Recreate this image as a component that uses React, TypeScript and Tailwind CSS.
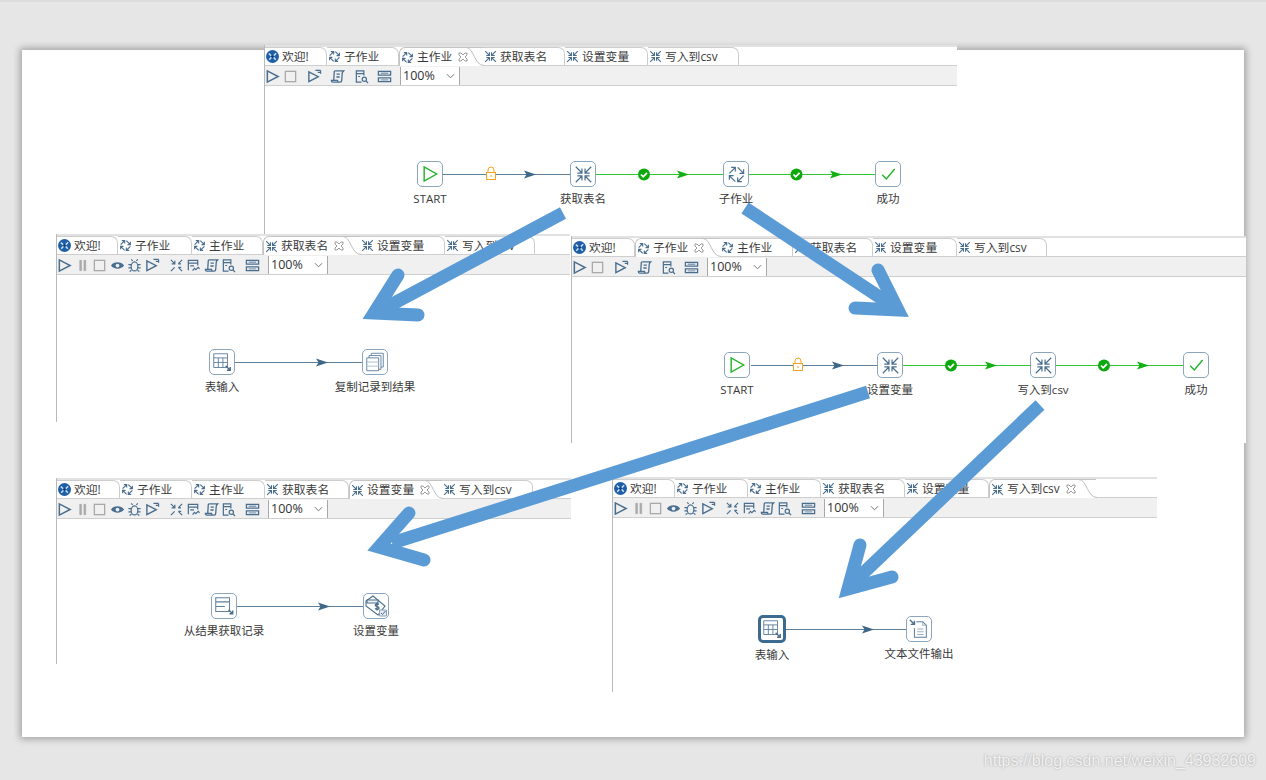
import React from "react";

const font = "font-['Open_Sans','Noto_Sans_CJK_SC',sans-serif]";

type IconProps = { className?: string; width?: number };
const stroke = "#4a6e8e";

function ArrowsIn({ className = "w-[13px] h-[13px]", width = 1.4 }: IconProps) {
  return (
    <svg viewBox="0 0 16 16" className={className} fill="none" stroke={stroke} strokeWidth={width}>
      <path d="M1.5 1.5 6.500 6.500M2.800 6.800h3.900V2.900M14.500 1.500 9.500 6.500M13.200 6.800H9.300V2.900M1.500 14.500l5-5M2.800 9.200h3.900v3.900M14.500 14.500l-5-5M13.200 9.200H9.300v3.900" />
    </svg>
  );
}

// the job icon: four arrows chasing each other round
function ArrowsRound({ className = "w-[13px] h-[13px]", width = 1.4 }: IconProps) {
  return (
    <svg viewBox="0 0 16 16" className={className} fill="none" stroke={stroke} strokeWidth={width}>
      <path d="M2 7 7 2M3.500 2H7v3.500M9 2l5 5M14 3.500V7h-3.500M14 9l-5 5M12.500 14H9v-3.500M7 14 2 9M2 12.500V9h3.500" />
    </svg>
  );
}

function Logo() {
  return (
    <svg viewBox="0 0 16 16" className="w-[13px] h-[13px]">
      <circle cx="8" cy="8" r="8" fill="#1f5fa8" />
      <path d="M3.500 4.500 6.500 7M12.500 4 9.500 7M4 12l2.800-3M12 12 9.300 9" stroke="#cfe2f5" strokeWidth="1.800" />
      <circle cx="8" cy="8" r="1.600" fill="#0e3d78" />
    </svg>
  );
}

function CloseMark() {
  return (
    <svg viewBox="0 0 10 10" className="w-[10px] h-[10px]" fill="none" stroke="#9a9a9a" strokeWidth="1">
      <path d="M1 1h2l2 2 2-2h2v2L7 5l2 2v2H7L5 7 3 9H1V7l2-2-2-2z" />
    </svg>
  );
}

function ToolIcon({ kind }: { kind: string }) {
  const common = { fill: "none", stroke, strokeWidth: 1.3 };
  return (
    <svg viewBox="0 0 16 16" className="w-[15px] h-[15px] shrink-0">
      {kind === "play" && <path d="M2.500 2v12L14 8z" {...common} strokeWidth={1.6} />}
      {kind === "pause" && <path d="M5 2.500h2v11H5zM9.500 2.500h2v11h-2z" fill="#a9a9a9" stroke="#a9a9a9" strokeWidth={0.6} />}
      {kind === "stop" && <rect x="2.500" y="2.500" width="11" height="11" fill="none" stroke="#a9a9a9" strokeWidth={1.4} />}
      {kind === "eye" && (
        <g>
          <path d="M1 8c3-4.500 11-4.500 14 0-3 4.500-11 4.500-14 0z" fill={stroke} />
          <circle cx="8" cy="8" r="2" fill="#e8eef3" />
        </g>
      )}
      {kind === "bug" && (
        <g {...common}>
          <ellipse cx="8" cy="9" rx="3.600" ry="4.800" />
          <path d="M6 3 4.500 1.500M10 3l1.500-1.500M4.400 7H1.500M11.600 7h2.900M4.400 10.500H1.500M11.600 10.500h2.900M4.800 13l-2 1.500M11.200 13l2 1.500" />
        </g>
      )}
      {kind === "runopt" && (
        <g {...common}>
          <path d="M2 3v10.500L12 8.200 2 3z" strokeWidth={1.5} />
          <path d="M9 1.500h5.500M14.500 1.500V5M11.500 3.500h2.500" />
        </g>
      )}
      {kind === "arrows" && (
        <g {...common}>
          <path d="M2 2l4 4M2.800 6.200h3.400V2.800M14 2l-4 4M9.800 6.200h3M2 14l4-4M10 10l4 4M10 10h3" />
        </g>
      )}
      {kind === "doc" && (
        <g {...common}>
          <path d="M2.500 13V2.500h10V8M2.500 5.500h10M4.500 8.500h4" />
          <path d="M7 13.500l2-2.500 1.500 1.500L13 10l1.500 1.500" />
        </g>
      )}
      {kind === "script" && (
        <g {...common} strokeWidth={1.4}>
          <path d="M5.500 2H14.500c-1 .8-1.500 1.500-1.500 3l-.5 7c0 1.200-.8 2-2 2H3c-1 0-1.500-.8-1.500-1.800h6.500c0 1 .5 1.800 1.500 1.800" />
          <path d="M5.500 2c-.8 0-1 .8-1 1.800L4 12" />
          <path d="M7 5.500h3.500M6.800 8.500h3.500" />
        </g>
      )}
      {kind === "search" && (
        <g {...common}>
          <path d="M8 14H2.500V2h8v5M2.500 5h8M4.500 8h2" />
          <circle cx="11" cy="11" r="2.300" />
          <path d="M12.800 12.800 15 15" />
        </g>
      )}
      {kind === "grid" && (
        <g {...common} strokeWidth={1.4}>
          <path d="M1.500 2.500h13v4h-13zM1.500 9.500h13v4h-13z" />
          <path d="M4 4.500h8M4 11.500h8" stroke="#8aa2b7" />
        </g>
      )}
    </svg>
  );
}

const jobTools = ["play", "stop", "runopt", "script", "search", "grid"];
const transTools = ["play", "pause", "stop", "eye", "bug", "runopt", "arrows", "doc", "script", "search", "grid"];

function Toolbar({ tools }: { tools: string[] }) {
  const isJob = tools.length === 6;
  return (
    <div className="flex h-[20px] items-stretch bg-[#f0f0f0] border-b border-[#cfcfcf] pt-px">
      <div className={isJob ? "flex items-center gap-[3px]" : "flex items-center gap-[2.5px]"}>
        {tools.map((t, i) => (
          <span
            key={i}
            className={
              isJob
                ? i >= 2
                  ? "ml-[5.5px] flex"
                  : "flex"
                : t === "arrows" || t === "grid"
                  ? "ml-[6.5px] flex"
                  : "flex"
            }
          >
            <ToolIcon kind={t} />
          </span>
        ))}
      </div>
      <div className="ml-[8px] flex w-[60px] shrink-0 items-center justify-between border-x border-[#a8a8a8] bg-white pl-[2px] pr-[4px] text-[12.5px] text-[#333]">
        <span>100%</span>
        <svg viewBox="0 0 10 6" className="w-[9px] h-[6px]" fill="none" stroke="#666" strokeWidth="1">
          <path d="M1 1l4 4 4-4" />
        </svg>
      </div>
    </div>
  );
}

type Tab = { label: string; icon: "logo" | "job" | "trans"; width: string; active?: boolean };

function TabItem({ tab }: { tab: Tab }) {
  const icon = tab.icon === "logo" ? <Logo /> : tab.icon === "job" ? <ArrowsRound /> : <ArrowsIn />;
  if (tab.active) {
    return (
      <div className={`relative -mb-px flex h-[19px] shrink-0 items-center gap-[3px] rounded-tl-[6px] border-l border-t border-[#c4c4c4] bg-white pl-[1px] ${tab.width}`}>
        {icon}
        <span>{tab.label}</span>
        <span className="relative z-10 ml-[3px] flex">
          <CloseMark />
        </span>
        <svg viewBox="0 0 18 19" className="absolute right-[-1px] top-[-1px] h-[19px] w-[18px]">
          <path d="M0 .5C8 .5 8 18.500 18 18.500V19H0z" fill="#fff" />
          <path d="M0 .5C8 .5 8 18.500 18 18.500" fill="none" stroke="#bdbdbd" />
        </svg>
      </div>
    );
  }
  return (
    <div className={`flex h-[18px] shrink-0 items-center gap-[3px] rounded-tr-[7px] border-r border-t border-[#cdcdcd] pl-[1px] ${tab.width}`}>
      {icon}
      <span>{tab.label}</span>
    </div>
  );
}

function NodeIcon({ kind }: { kind: string }) {
  if (kind === "start")
    return (
      <svg viewBox="0 0 24 24" className="w-[20px] h-[20px]" fill="none" stroke="#22b327" strokeWidth="1.700">
        <path d="M5 3.500v17L20 12z" />
      </svg>
    );
  if (kind === "ok")
    return (
      <svg viewBox="0 0 24 24" className="w-[20px] h-[20px]" fill="none" stroke="#22b327" strokeWidth="1.700">
        <path d="M5 13l5 5L20 6" />
      </svg>
    );
  if (kind === "trans") return <ArrowsIn className="w-[19px] h-[19px]" width={1} />;
  if (kind === "job") return <ArrowsRound className="w-[19px] h-[19px]" width={1} />;
  if (kind === "table")
    return (
      <svg viewBox="0 0 24 24" className="w-[22px] h-[22px]" fill="none" stroke="#5f7f9c" strokeWidth="1">
        <path d="M3 3h15v15H3zM3 7.500h15M3 12.500h15M8 7.500V18M13 7.500V18" />
        <path d="M16 16l5 5M21 17.500V21h-3.500" strokeWidth="1.500" stroke={stroke} />
      </svg>
    );
  if (kind === "copy")
    return (
      <svg viewBox="0 0 24 24" className="w-[22px] h-[22px]" fill="#fff" stroke="#5f7f9c" strokeWidth="1">
        <path d="M8 2.500h13v15H8z" />
        <path d="M5.500 5h13v15h-13z" />
        <path d="M3 7.500h13v14H3z" />
        <path d="M3 12h13M3 16.500h13" stroke="#a9bccb" />
      </svg>
    );
  if (kind === "result")
    return (
      <svg viewBox="0 0 24 24" className="w-[22px] h-[22px]" fill="none" stroke="#5f7f9c" strokeWidth="1.100">
        <path d="M3 3h15v15H3zM3 7.500h15M3 12.500h10" />
        <path d="M17 16l4.500 4.500M21.500 17v3.500H18" strokeWidth="1.500" stroke={stroke} />
      </svg>
    );
  if (kind === "setvar")
    return (
      <svg viewBox="0 0 24 24" className="w-[24px] h-[24px]" fill="none" stroke={stroke} strokeWidth="1.100">
        <path d="M2 7l7-5 12 10-7 9L2 12z" fill="#fff" />
        <path d="M3 6h11v3H3z" fill="#eef2f6" />
        <path d="M15 10.500c-2-1.500-4-.5-3.500 1s3.500 1 3.500 2.500-2.500 2-4 .5M13 8.500v8" strokeWidth="1.400" />
        <path d="M15.500 16h7v6h-7z" fill="#e4eaf0" strokeWidth="1" stroke="#8aa2b7" />
        <path d="M17 19l1.500 1.500 3-3.500" strokeWidth="1" />
      </svg>
    );
  return (
    <svg viewBox="0 0 24 24" className="w-[22px] h-[22px]" fill="none" stroke="#5f7f9c" strokeWidth="1.100">
      <path d="M9 4h7l4 4v13H7V11" />
      <path d="M16 4v4h4M10 12h7M10 15h7M10 18h7" stroke="#9ab0c2" />
      <path d="M2 2l5 5M7 3v4H3" strokeWidth="1.500" stroke={stroke} />
    </svg>
  );
}

function FlowNode({ pos, kind, label, selected }: { pos: string; kind: string; label: string; selected?: boolean }) {
  return (
    <div className={`absolute flex w-[120px] flex-col items-center ${pos}`}>
      <div
        className={
          selected
            ? "flex h-[28px] w-[28px] items-center justify-center rounded-[5px] border-[3px] border-[#3d6a8f] bg-white -mt-[1px]"
            : "flex h-[26px] w-[26px] items-center justify-center rounded-[5px] border-[1.5px] border-[#8ba5bc] bg-white"
        }
      >
        <NodeIcon kind={kind} />
      </div>
      <span className="mt-[3px] whitespace-nowrap text-[11.5px] leading-[17px] text-[#3a3a3a]">{label}</span>
    </div>
  );
}

function Hop({ x1, x2, y, tip, green }: { x1: number; x2: number; y: number; tip: number; green?: boolean }) {
  const line = green ? "#33c633" : "#5f7f9c";
  const head = green ? "#12b012" : "#3f6786";
  return (
    <g>
      <path d={`M${x1} ${y + 0.5}H${x2}`} stroke={line} strokeWidth="1.200" />
      <path d={`M${tip} ${y + 0.5}L${tip - 12} ${y - 3.5}L${tip - 9.5} ${y + 0.5}L${tip - 12} ${y + 4.5}z`} fill={head} />
    </g>
  );
}

function Check({ cx, y }: { cx: number; y: number }) {
  return (
    <g>
      <circle cx={cx} cy={y + 0.5} r="6" fill="#0ca80c" />
      <path d={`M${cx - 3} ${y + 0.5}l2.200 2.300 3.800-4`} fill="none" stroke="#fff" strokeWidth="1.800" />
    </g>
  );
}

function Lock({ cx, y }: { cx: number; y: number }) {
  return (
    <g fill="none" stroke="#f4a41e" strokeWidth="1">
      <rect x={cx - 4.5} y={y - 1.5} width="9" height="7" fill="#fff" />
      <path d={`M${cx - 3} ${y - 1.5}v-2.500a3 3 0 0 1 6 0v2.500`} />
      <path d={`M${cx} ${y + 1}v2`} />
    </g>
  );
}

function EditorWindow({ pos, tabs, tools, children }: { pos: string; tabs: Tab[]; tools: string[]; children: React.ReactNode }) {
  return (
    <div className={`absolute flex flex-col overflow-hidden bg-white text-[11.8px] text-[#3a3a3a] shadow-[-1px_0_0_#b9b9b9] ${font} ${pos}`}>
      <div className="h-[2px] shrink-0 bg-[#e2e2e2]" />
      <div className="flex h-[19px] shrink-0 border-b border-[#cfcfcf]">
        {tabs.map((t) => (
          <TabItem key={t.label} tab={t} />
        ))}
      </div>
      <Toolbar tools={tools} />
      <div className="flex-1 bg-white" />
      {children}
    </div>
  );
}

function makeTabs(activeIndex: number, widths: string[]): Tab[] {
  const names: [string, Tab["icon"]][] = [
    ["欢迎!", "logo"],
    ["子作业", "job"],
    ["主作业", "job"],
    ["获取表名", "trans"],
    ["设置变量", "trans"],
    ["写入到csv", "trans"],
  ];
  return names.map(([label, icon], i) => ({ label, icon, width: widths[i], active: i === activeIndex }));
}

export default function App() {
  return (
    <div className="relative h-[780px] w-[1266px] overflow-hidden border-t-2 border-[#dcdcdc] bg-[#e6e6e6]">
      <div className="ml-[22px] mt-[48px] h-[687px] w-[1222px] bg-white shadow-[0_0_7px_2px_rgba(0,0,0,0.3)]" />

      {/* main job */}
      <EditorWindow
        pos="left-[265px] top-[43px] h-[190px] w-[692px]"
        tabs={makeTabs(2, ["w-[62px]", "w-[72px]", "w-[84px]", "w-[82px]", "w-[83px]", "w-[91px]"])}
        tools={jobTools}
      >
        <svg className="absolute inset-0 h-full w-full">
          <Hop x1={165} x2={305} y={129} tip={271} />
          <Lock cx={226} y={129} />
          <Hop x1={318} x2={458} y={129} tip={424} green />
          <Check cx={379} y={129} />
          <Hop x1={471} x2={610} y={129} tip={577} green />
          <Check cx={531.5} y={129} />
        </svg>
        <FlowNode pos="left-[105px] top-[116px]" kind="start" label="START" />
        <FlowNode pos="left-[258px] top-[116px]" kind="trans" label="获取表名" />
        <FlowNode pos="left-[411px] top-[116px]" kind="job" label="子作业" />
        <FlowNode pos="left-[563px] top-[116px]" kind="ok" label="成功" />
      </EditorWindow>

      {/* get table names */}
      <EditorWindow
        pos="left-[57px] top-[232px] h-[188px] w-[513px]"
        tabs={makeTabs(3, ["w-[61px]", "w-[74px]", "w-[71px]", "w-[97px]", "w-[85px]", "w-[90px]"])}
        tools={transTools}
      >
        <svg className="absolute inset-0 h-full w-full">
          <Hop x1={178} x2={305} y={128} tip={271} />
        </svg>
        <FlowNode pos="left-[105px] top-[115px]" kind="table" label="表输入" />
        <FlowNode pos="left-[258px] top-[115px]" kind="copy" label="复制记录到结果" />
      </EditorWindow>

      {/* sub job */}
      <EditorWindow
        pos="left-[572px] top-[234px] h-[207px] w-[674px]"
        tabs={makeTabs(1, ["w-[63px]", "w-[85px]", "w-[73px]", "w-[80px]", "w-[84px]", "w-[90px]"])}
        tools={jobTools}
      >
        <svg className="absolute inset-0 h-full w-full">
          <Hop x1={179} x2={305} y={129} tip={272} />
          <Lock cx={226} y={129} />
          <Hop x1={331} x2={459} y={129} tip={425} green />
          <Check cx={379} y={129} />
          <Hop x1={484} x2={611} y={129} tip={577} green />
          <Check cx={532} y={129} />
        </svg>
        <FlowNode pos="left-[105px] top-[116px]" kind="start" label="START" />
        <FlowNode pos="left-[258px] top-[116px]" kind="trans" label="设置变量" />
        <FlowNode pos="left-[411px] top-[116px]" kind="trans" label="写入到csv" />
        <FlowNode pos="left-[564px] top-[116px]" kind="ok" label="成功" />
      </EditorWindow>

      {/* set variables */}
      <EditorWindow
        pos="left-[57px] top-[476px] h-[186px] w-[514px]"
        tabs={makeTabs(4, ["w-[63px]", "w-[72px]", "w-[73px]", "w-[84px]", "w-[93px]", "w-[91px]"])}
        tools={transTools}
      >
        <svg className="absolute inset-0 h-full w-full">
          <Hop x1={180} x2={307} y={128} tip={273} />
        </svg>
        <FlowNode pos="left-[107px] top-[115px]" kind="result" label="从结果获取记录" />
        <FlowNode pos="left-[259px] top-[115px]" kind="setvar" label="设置变量" />
      </EditorWindow>

      {/* write csv */}
      <EditorWindow
        pos="left-[613px] top-[475px] h-[215px] w-[544px]"
        tabs={makeTabs(5, ["w-[62px]", "w-[73px]", "w-[73px]", "w-[84px]", "w-[84px]", "w-[107px]"])}
        tools={transTools}
      >
        <svg className="absolute inset-0 h-full w-full">
          <Hop x1={173} x2={293} y={152} tip={261} />
        </svg>
        <FlowNode pos="left-[99px] top-[139px]" kind="table" selected label="表输入" />
        <FlowNode pos="left-[246px] top-[139px]" kind="textout" label="文本文件输出" />
      </EditorWindow>

      {/* callout arrows over the windows */}
      <svg className="absolute left-0 top-[-2px] h-[780px] w-[1266px]" fill="none" stroke="#5b9bd5" strokeWidth="13" strokeLinejoin="miter" strokeMiterlimit="6">
        <path d="M563 213 385 308" />
        <path d="M398 275 374 313 418 315" strokeLinecap="round" />
        <path d="M745 208 890 304" />
        <path d="M878 270 898 310 855 308" strokeLinecap="round" />
        <path d="M868 392 392 543" />
        <path d="M409 513 379 547 424 560" strokeLinecap="round" />
        <path d="M1040 405 856 580" />
        <path d="M860 545 848 589 892 577" strokeLinecap="round" />
      </svg>

      <div className="absolute right-[10px] bottom-[7px] font-['Liberation_Sans',sans-serif] text-[16px] text-[#f2f2f2] [text-shadow:0_0_2px_#9a9a9a]">
        https://blog.csdn.net/weixin_43932609
      </div>
    </div>
  );
}
